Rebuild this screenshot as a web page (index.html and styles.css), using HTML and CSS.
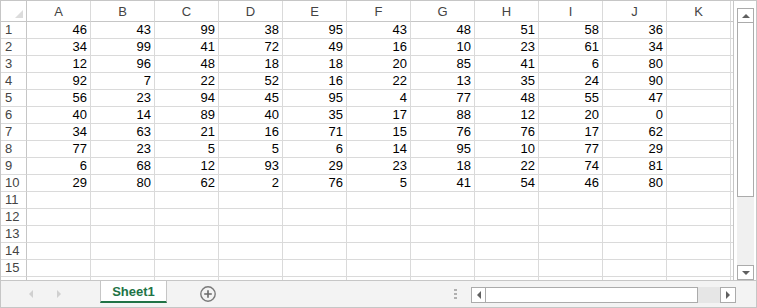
FILE: index.html
```html
<!DOCTYPE html>
<html lang="en">
<head>
    <meta charset="UTF-8">
    <title>Sheet1</title>
    <link rel="stylesheet" href="styles.css">
</head>
<body>
    <div class="book">
        <div class="main">
            <div class="sheetview">
                <div class="sheet">
                    <div class="hd corner"><span class="tri"></span></div>
                    <div class="hd ch">A</div><div class="hd ch">B</div><div class="hd ch">C</div><div class="hd ch">D</div><div class="hd ch">E</div><div class="hd ch">F</div><div class="hd ch">G</div><div class="hd ch">H</div><div class="hd ch">I</div><div class="hd ch">J</div><div class="hd ch">K</div><div class="hd ch"></div>

                    <div class="rh">1</div><div class="c">46</div><div class="c">43</div><div class="c">99</div><div class="c">38</div><div class="c">95</div><div class="c">43</div><div class="c">48</div><div class="c">51</div><div class="c">58</div><div class="c">36</div><div class="c"></div><div class="c"></div>
                    <div class="rh">2</div><div class="c">34</div><div class="c">99</div><div class="c">41</div><div class="c">72</div><div class="c">49</div><div class="c">16</div><div class="c">10</div><div class="c">23</div><div class="c">61</div><div class="c">34</div><div class="c"></div><div class="c"></div>
                    <div class="rh">3</div><div class="c">12</div><div class="c">96</div><div class="c">48</div><div class="c">18</div><div class="c">18</div><div class="c">20</div><div class="c">85</div><div class="c">41</div><div class="c">6</div><div class="c">80</div><div class="c"></div><div class="c"></div>
                    <div class="rh">4</div><div class="c">92</div><div class="c">7</div><div class="c">22</div><div class="c">52</div><div class="c">16</div><div class="c">22</div><div class="c">13</div><div class="c">35</div><div class="c">24</div><div class="c">90</div><div class="c"></div><div class="c"></div>
                    <div class="rh">5</div><div class="c">56</div><div class="c">23</div><div class="c">94</div><div class="c">45</div><div class="c">95</div><div class="c">4</div><div class="c">77</div><div class="c">48</div><div class="c">55</div><div class="c">47</div><div class="c"></div><div class="c"></div>
                    <div class="rh">6</div><div class="c">40</div><div class="c">14</div><div class="c">89</div><div class="c">40</div><div class="c">35</div><div class="c">17</div><div class="c">88</div><div class="c">12</div><div class="c">20</div><div class="c">0</div><div class="c"></div><div class="c"></div>
                    <div class="rh">7</div><div class="c">34</div><div class="c">63</div><div class="c">21</div><div class="c">16</div><div class="c">71</div><div class="c">15</div><div class="c">76</div><div class="c">76</div><div class="c">17</div><div class="c">62</div><div class="c"></div><div class="c"></div>
                    <div class="rh">8</div><div class="c">77</div><div class="c">23</div><div class="c">5</div><div class="c">5</div><div class="c">6</div><div class="c">14</div><div class="c">95</div><div class="c">10</div><div class="c">77</div><div class="c">29</div><div class="c"></div><div class="c"></div>
                    <div class="rh">9</div><div class="c">6</div><div class="c">68</div><div class="c">12</div><div class="c">93</div><div class="c">29</div><div class="c">23</div><div class="c">18</div><div class="c">22</div><div class="c">74</div><div class="c">81</div><div class="c"></div><div class="c"></div>
                    <div class="rh">10</div><div class="c">29</div><div class="c">80</div><div class="c">62</div><div class="c">2</div><div class="c">76</div><div class="c">5</div><div class="c">41</div><div class="c">54</div><div class="c">46</div><div class="c">80</div><div class="c"></div><div class="c"></div>
                    <div class="rh">11</div><div class="c"></div><div class="c"></div><div class="c"></div><div class="c"></div><div class="c"></div><div class="c"></div><div class="c"></div><div class="c"></div><div class="c"></div><div class="c"></div><div class="c"></div><div class="c"></div>
                    <div class="rh">12</div><div class="c"></div><div class="c"></div><div class="c"></div><div class="c"></div><div class="c"></div><div class="c"></div><div class="c"></div><div class="c"></div><div class="c"></div><div class="c"></div><div class="c"></div><div class="c"></div>
                    <div class="rh">13</div><div class="c"></div><div class="c"></div><div class="c"></div><div class="c"></div><div class="c"></div><div class="c"></div><div class="c"></div><div class="c"></div><div class="c"></div><div class="c"></div><div class="c"></div><div class="c"></div>
                    <div class="rh">14</div><div class="c"></div><div class="c"></div><div class="c"></div><div class="c"></div><div class="c"></div><div class="c"></div><div class="c"></div><div class="c"></div><div class="c"></div><div class="c"></div><div class="c"></div><div class="c"></div>
                    <div class="rh">15</div><div class="c"></div><div class="c"></div><div class="c"></div><div class="c"></div><div class="c"></div><div class="c"></div><div class="c"></div><div class="c"></div><div class="c"></div><div class="c"></div><div class="c"></div><div class="c"></div>
                    <div class="rh"></div><div class="c"></div><div class="c"></div><div class="c"></div><div class="c"></div><div class="c"></div><div class="c"></div><div class="c"></div><div class="c"></div><div class="c"></div><div class="c"></div><div class="c"></div><div class="c"></div>
                </div>
            </div>
            <div class="vscroll">
                <div class="sbtn"><span class="arr up"></span></div>
                <div class="vthumb"></div>
                <div class="vtrack"></div>
                <div class="sbtn"><span class="arr down"></span></div>
            </div>
        </div>

        <div class="tabbar">
            <div class="nav">
                <span class="arr navl"></span>
                <span class="arr navr"></span>
            </div>
            <div class="tab">Sheet1</div>
            <div class="add">
                <svg width="16" height="16" viewBox="0 0 16 16">
                    <circle cx="8" cy="8" r="7.2" fill="none" stroke="#7a7a7a" stroke-width="1.4"/>
                    <path d="M8 4.2v7.6M4.2 8h7.6" stroke="#6a6a6a" stroke-width="1.6"/>
                </svg>
            </div>
            <div class="spacer"></div>
            <div class="dots"><i></i><i></i><i></i></div>
            <div class="hscroll">
                <div class="sbtn h"><span class="arr left"></span></div>
                <div class="hthumb"></div>
                <div class="htrack"></div>
                <div class="sbtn h"><span class="arr right"></span></div>
            </div>
        </div>
    </div>
</body>
</html>
```
FILE: styles.css
```css
* {
    box-sizing: border-box;
}
body {
    margin: 0;
    background: #fff;
    font-family: "Liberation Sans", Arial, sans-serif;
    font-size: 13px;
}
.book {
    width: 757px;
    height: 308px;
    border: 1px solid #c6c6c6;
    display: flex;
    flex-direction: column;
    overflow: hidden;
}
.main {
    display: flex;
    height: 279px;
}
.sheetview {
    width: 733px;
    border-right: 1px solid #c6c6c6;
    overflow: hidden;
}
.sheet {
    display: grid;
    grid-template-columns: 26px repeat(12, 64px);
    grid-template-rows: 21px;
    grid-auto-rows: 17px;
}
.sheet > div {
    border-right: 1px solid #dadada;
    border-bottom: 1px solid #dadada;
    line-height: 16px;
    white-space: nowrap;
    overflow: hidden;
}
.sheet > .hd {
    border-bottom-color: #c6c6c6;
    color: #444;
    line-height: 21px;
}
.ch {
    text-align: center;
}
.corner {
    display: flex;
    justify-content: flex-end;
    align-items: flex-end;
    padding: 0 3px 3px 0;
}
.sheet > .corner,
.sheet > .rh {
    border-right-color: #c6c6c6;
}
.tri {
    width: 0;
    height: 0;
    border-left: 8px solid transparent;
    border-bottom: 8px solid #dcdcdc;
}
.rh {
    color: #444;
    padding-left: 4px;
}
.c {
    text-align: right;
    padding-right: 3px;
    color: #000;
}

/* vertical scroll */
.vscroll {
    width: 22px;
    padding: 7px 2px 0 3px;
    display: flex;
    flex-direction: column;
}
.sbtn {
    height: 15px;
    border: 1px solid #ababab;
    background: #fff;
    display: flex;
    align-items: center;
    justify-content: center;
}
.vthumb {
    height: 174px;
    border: 1px solid #ababab;
    border-top: 0;
    background: #fff;
}
.vtrack {
    flex: 1;
    background: #f0f0f0;
}
.arr {
    width: 0;
    height: 0;
}
.up {
    border-left: 4px solid transparent;
    border-right: 4px solid transparent;
    border-bottom: 4px solid #606060;
}
.down {
    border-left: 4px solid transparent;
    border-right: 4px solid transparent;
    border-top: 4px solid #606060;
}
.left {
    border-top: 4px solid transparent;
    border-bottom: 4px solid transparent;
    border-right: 4px solid #606060;
}
.right {
    border-top: 4px solid transparent;
    border-bottom: 4px solid transparent;
    border-left: 4px solid #606060;
}

/* sheet tabs bar */
.tabbar {
    flex: 1;
    display: flex;
    align-items: flex-start;
    background: #f3f3f3;
    border-top: 1px solid #c6c6c6;
}
.nav {
    width: 99px;
    height: 25px;
    display: flex;
    align-items: center;
    padding-left: 28px;
    gap: 24px;
}
.navl {
    border-top: 4px solid transparent;
    border-bottom: 4px solid transparent;
    border-right: 4px solid #d0d0d0;
}
.navr {
    border-top: 4px solid transparent;
    border-bottom: 4px solid transparent;
    border-left: 4px solid #d0d0d0;
}
.tab {
    width: 67px;
    height: 23px;
    margin-top: -1px;
    background: #fff;
    border: 1px solid #c6c6c6;
    border-bottom: 2px solid #217346;
    color: #217346;
    font-weight: bold;
    text-align: center;
    line-height: 21px;
}
.add {
    margin: 5px 0 0 33px;
    width: 16px;
    height: 16px;
}
.add svg {
    display: block;
}
.spacer {
    flex: 1;
}
.dots {
    width: 3px;
    margin: 8px 14px 0 0;
    display: flex;
    flex-direction: column;
    gap: 2px;
}
.dots i {
    display: block;
    width: 3px;
    height: 2px;
    background: #b0b0b0;
}
.hscroll {
    width: 265px;
    height: 16px;
    margin: 6px 20px 0 0;
    display: flex;
}
.sbtn.h {
    width: 15px;
    height: 16px;
}
.sbtn.h:last-child {
    width: 16px;
}
.hthumb {
    width: 212px;
    border: 1px solid #ababab;
    border-left: 0;
    background: #fff;
}
.htrack {
    flex: 1;
    background: #e6e6e6;
}
```
